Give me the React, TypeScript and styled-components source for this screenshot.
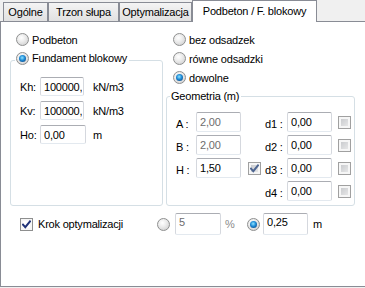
import { Fragment } from "react";
import styled, { createGlobalStyle } from "styled-components";

const GlobalStyle = createGlobalStyle`
  html, body {
    margin: 0;
    padding: 0;
    background: #f0f0f0;
  }
  body {
    font-family: "Liberation Sans", Arial, sans-serif;
    font-size: 11px;
    color: #000;
  }
`;

const Window = styled.div`
  width: 365px;
  height: 288px;
  overflow: hidden;
  background: #f0f0f0;
  letter-spacing: -0.2px;
`;

const TabStrip = styled.div`
  position: relative;
  z-index: 1;
  display: flex;
  align-items: flex-end;
  height: 21px;
  padding-left: 3px;
  box-sizing: border-box;
`;

const Tab = styled.div<{ $active?: boolean; $w: number }>`
  box-sizing: border-box;
  width: ${(p) => p.$w}px;
  height: ${(p) => (p.$active ? 22 : 19)}px;
  margin-bottom: ${(p) => (p.$active ? -1 : 0)}px;
  padding-bottom: ${(p) => (p.$active ? 2 : 0)}px;
  border: 1px solid #898c95;
  border-bottom: none;
  background: ${(p) =>
    p.$active ? "#fff" : "linear-gradient(#f4f4f4, #e9e9e9 55%, #e1e1e1)"};
  display: flex;
  align-items: center;
  justify-content: center;
  white-space: nowrap;
`;

const Panel = styled.div`
  box-sizing: border-box;
  width: 366px;
  height: 266px;
  background: #fff;
  border: 1px solid #898c95;
  border-right: none;
  padding: 11px 0 0 9px;
`;

const TopSection = styled.div`
  display: flex;
  gap: 3px;
  height: 173px;
`;

const Column = styled.div<{ $w: number }>`
  width: ${(p) => p.$w}px;
  display: flex;
  flex-direction: column;
  gap: 6px;
`;

const OptionRow = styled.div<{ $indent?: number }>`
  display: flex;
  align-items: center;
  gap: 3px;
  height: 13px;
  padding-left: ${(p) => p.$indent ?? 0}px;
  white-space: nowrap;
`;

const Radio = styled.span<{ $checked?: boolean }>`
  box-sizing: border-box;
  flex: none;
  width: 13px;
  height: 13px;
  border-radius: 50%;
  border: 1px solid #8e8f8f;
  background: radial-gradient(
    circle at 40% 35%,
    #ffffff 0%,
    #ececec 40%,
    #c8c8c8 100%
  );
  display: inline-flex;
  align-items: center;
  justify-content: center;

  &::after {
    content: "";
    display: ${(p) => (p.$checked ? "block" : "none")};
    width: 7px;
    height: 7px;
    border-radius: 50%;
    background: radial-gradient(
      circle at 45% 40%,
      #8fe4ff 0%,
      #1d8ad6 45%,
      #0b3468 100%
    );
  }
`;

const CheckBox = styled.span<{ $checked?: boolean; $dim?: boolean }>`
  box-sizing: border-box;
  flex: none;
  width: 13px;
  height: 13px;
  border: 1px solid ${(p) => (p.$dim ? "#a0a0a0" : "#8e8f8f")};
  background: ${(p) =>
    p.$checked && !p.$dim
      ? "#fff"
      : "linear-gradient(135deg, #c2c4c8, #eeeeee)"};
  box-shadow: inset 0 0 0 2px #f6f6f6;
  display: inline-flex;
  align-items: center;
  justify-content: center;
`;

const Group = styled.fieldset`
  flex: 1;
  min-width: 0;
  margin: 0;
  padding: 0;
  border: 1px solid #d5dfe5;
  border-radius: 3px;
  box-sizing: border-box;
`;

const GroupLegend = styled.legend<{ $ml: number; $pb?: number }>`
  margin-left: ${(p) => p.$ml}px;
  padding: 0 2px ${(p) => p.$pb ?? 0}px 1px;
  line-height: 13px;
  white-space: nowrap;
`;

const FieldList = styled.div`
  display: flex;
  flex-direction: column;
  gap: 5px;
  padding: 8px 0 0 9px;
`;

const FieldRow = styled.div`
  display: flex;
  align-items: center;
  height: 19px;
`;

const FieldLabel = styled.span<{ $w: number }>`
  width: ${(p) => p.$w}px;
  flex: none;
  white-space: nowrap;
`;

const Unit = styled.span<{ $ml?: number; $muted?: boolean; $w?: number }>`
  margin-left: ${(p) => p.$ml ?? 0}px;
  width: ${(p) => (p.$w ? `${p.$w}px` : "auto")};
  flex: none;
  color: ${(p) => (p.$muted ? "#8a8a8a" : "#000")};
  white-space: nowrap;
`;

const TextBox = styled.input<{ $w: number; $h?: number; $muted?: boolean; $pb?: number }>`
  box-sizing: border-box;
  flex: none;
  width: ${(p) => p.$w}px;
  height: ${(p) => p.$h ?? 20}px;
  margin: 0;
  padding: 0 1px ${(p) => p.$pb ?? 0}px 3px;
  border: 1px solid;
  border-color: #abadb3 #d5d8de #e3e9ef #d5d8de;
  border-radius: 2px;
  background: #fff;
  font: inherit;
  letter-spacing: inherit;
  color: ${(p) => (p.$muted ? "#6d6d6d" : "#000")};
  outline: none;
`;

const GeoGrid = styled.div`
  display: grid;
  grid-template-columns: 20px 45px 7px 13px 4px 22px 45px 6px 13px;
  grid-auto-rows: 20px;
  row-gap: 3px;
  align-items: center;
  padding: 9px 0 0 9px;
`;

const Cell = styled.div<{ $col: number; $row: number; $label?: boolean }>`
  grid-column: ${(p) => p.$col};
  grid-row: ${(p) => p.$row};
  display: flex;
  align-items: center;
  padding-top: ${(p) => (p.$label ? 3 : 0)}px;
  white-space: nowrap;
`;

const BottomRow = styled.div`
  display: flex;
  align-items: center;
  height: 22px;
  margin-top: 7px;
  padding-left: 10px;
`;

const CheckOption = styled.label`
  width: 137px;
  flex: none;
  display: flex;
  align-items: center;
  gap: 2px;
  white-space: nowrap;
`;

const Gap = styled.span<{ $w: number }>`
  width: ${(p) => p.$w}px;
  flex: none;
`;

const CheckMark = ({ color }: { color: string }) => (
  <svg width="9" height="9" viewBox="0 0 9 9">
    <path
      d="M1 4.6 L3.3 7.2 L8 1.4"
      fill="none"
      stroke={color}
      strokeWidth="2"
      strokeLinecap="square"
    />
  </svg>
);

const tabs = [
  { label: "Ogólne", w: 45 },
  { label: "Trzon słupa", w: 71 },
  { label: "Optymalizacja", w: 73 },
  { label: "Podbeton / F. blokowy", w: 125, active: true },
];

const foundation = [
  { label: "Kh:", value: "100000,", unit: "kN/m3", w: 44 },
  { label: "Kv:", value: "100000,", unit: "kN/m3", w: 44 },
  { label: "Ho:", value: "0,00", unit: "m", w: 46 },
];

const geometry = [
  { label: "A :", value: "2,00", muted: true },
  { label: "B :", value: "2,00", muted: true },
  { label: "H :", value: "1,50", check: true },
];

const offsets = ["d1 :", "d2 :", "d3 :", "d4 :"];

export default function App() {
  return (
    <Window>
      <GlobalStyle />
      <TabStrip>
        {tabs.map((t) => (
          <Tab key={t.label} $w={t.w} $active={t.active}>
            {t.label}
          </Tab>
        ))}
      </TabStrip>
      <Panel>
        <TopSection>
          <Column $w={153}>
            <OptionRow $indent={6}>
              <Radio />
              Podbeton
            </OptionRow>
            <Group>
              <GroupLegend $ml={4} $pb={4}>
                <OptionRow>
                  <Radio $checked />
                  Fundament blokowy
                </OptionRow>
              </GroupLegend>
              <FieldList>
                {foundation.map((f) => (
                  <FieldRow key={f.label}>
                    <FieldLabel $w={20}>{f.label}</FieldLabel>
                    <TextBox $w={f.w} $h={19} value={f.value} readOnly />
                    <Unit $ml={f.w === 44 ? 9 : 7}>{f.unit}</Unit>
                  </FieldRow>
                ))}
              </FieldList>
            </Group>
          </Column>
          <Column $w={189}>
            <OptionRow $indent={7}>
              <Radio />
              bez odsadzek
            </OptionRow>
            <OptionRow $indent={7}>
              <Radio />
              równe odsadzki
            </OptionRow>
            <OptionRow $indent={7}>
              <Radio $checked />
              dowolne
            </OptionRow>
            <Group>
              <GroupLegend $ml={3}>Geometria (m)</GroupLegend>
              <GeoGrid>
                {geometry.map((g, i) => (
                  <Fragment key={g.label}>
                    <Cell $col={1} $row={i + 1} $label>
                      {g.label}
                    </Cell>
                    <Cell $col={2} $row={i + 1}>
                      <TextBox $w={45} value={g.value} $muted={g.muted} readOnly />
                    </Cell>
                    {g.check && (
                      <Cell $col={4} $row={i + 1}>
                        <CheckBox $checked $dim>
                          <CheckMark color="#4d6591" />
                        </CheckBox>
                      </Cell>
                    )}
                  </Fragment>
                ))}
                {offsets.map((d, i) => (
                  <Fragment key={d}>
                    <Cell $col={6} $row={i + 1} $label>
                      {d}
                    </Cell>
                    <Cell $col={7} $row={i + 1}>
                      <TextBox $w={45} value="0,00" readOnly />
                    </Cell>
                    <Cell $col={9} $row={i + 1}>
                      <CheckBox $dim />
                    </Cell>
                  </Fragment>
                ))}
              </GeoGrid>
            </Group>
          </Column>
        </TopSection>
        <BottomRow>
          <CheckOption>
            <CheckBox $checked>
              <CheckMark color="#1f3278" />
            </CheckBox>
            <Gap $w={1} />
            Krok optymalizacji
          </CheckOption>
          <Radio />
          <Gap $w={5} />
          <TextBox $w={46} $h={22} $pb={5} value="5" $muted readOnly />
          <Unit $ml={4} $w={22} $muted>
            %
          </Unit>
          <Radio $checked />
          <Gap $w={3} />
          <TextBox $w={45} $h={22} $pb={5} value="0,25" readOnly />
          <Unit $ml={5}>m</Unit>
        </BottomRow>
      </Panel>
    </Window>
  );
}
